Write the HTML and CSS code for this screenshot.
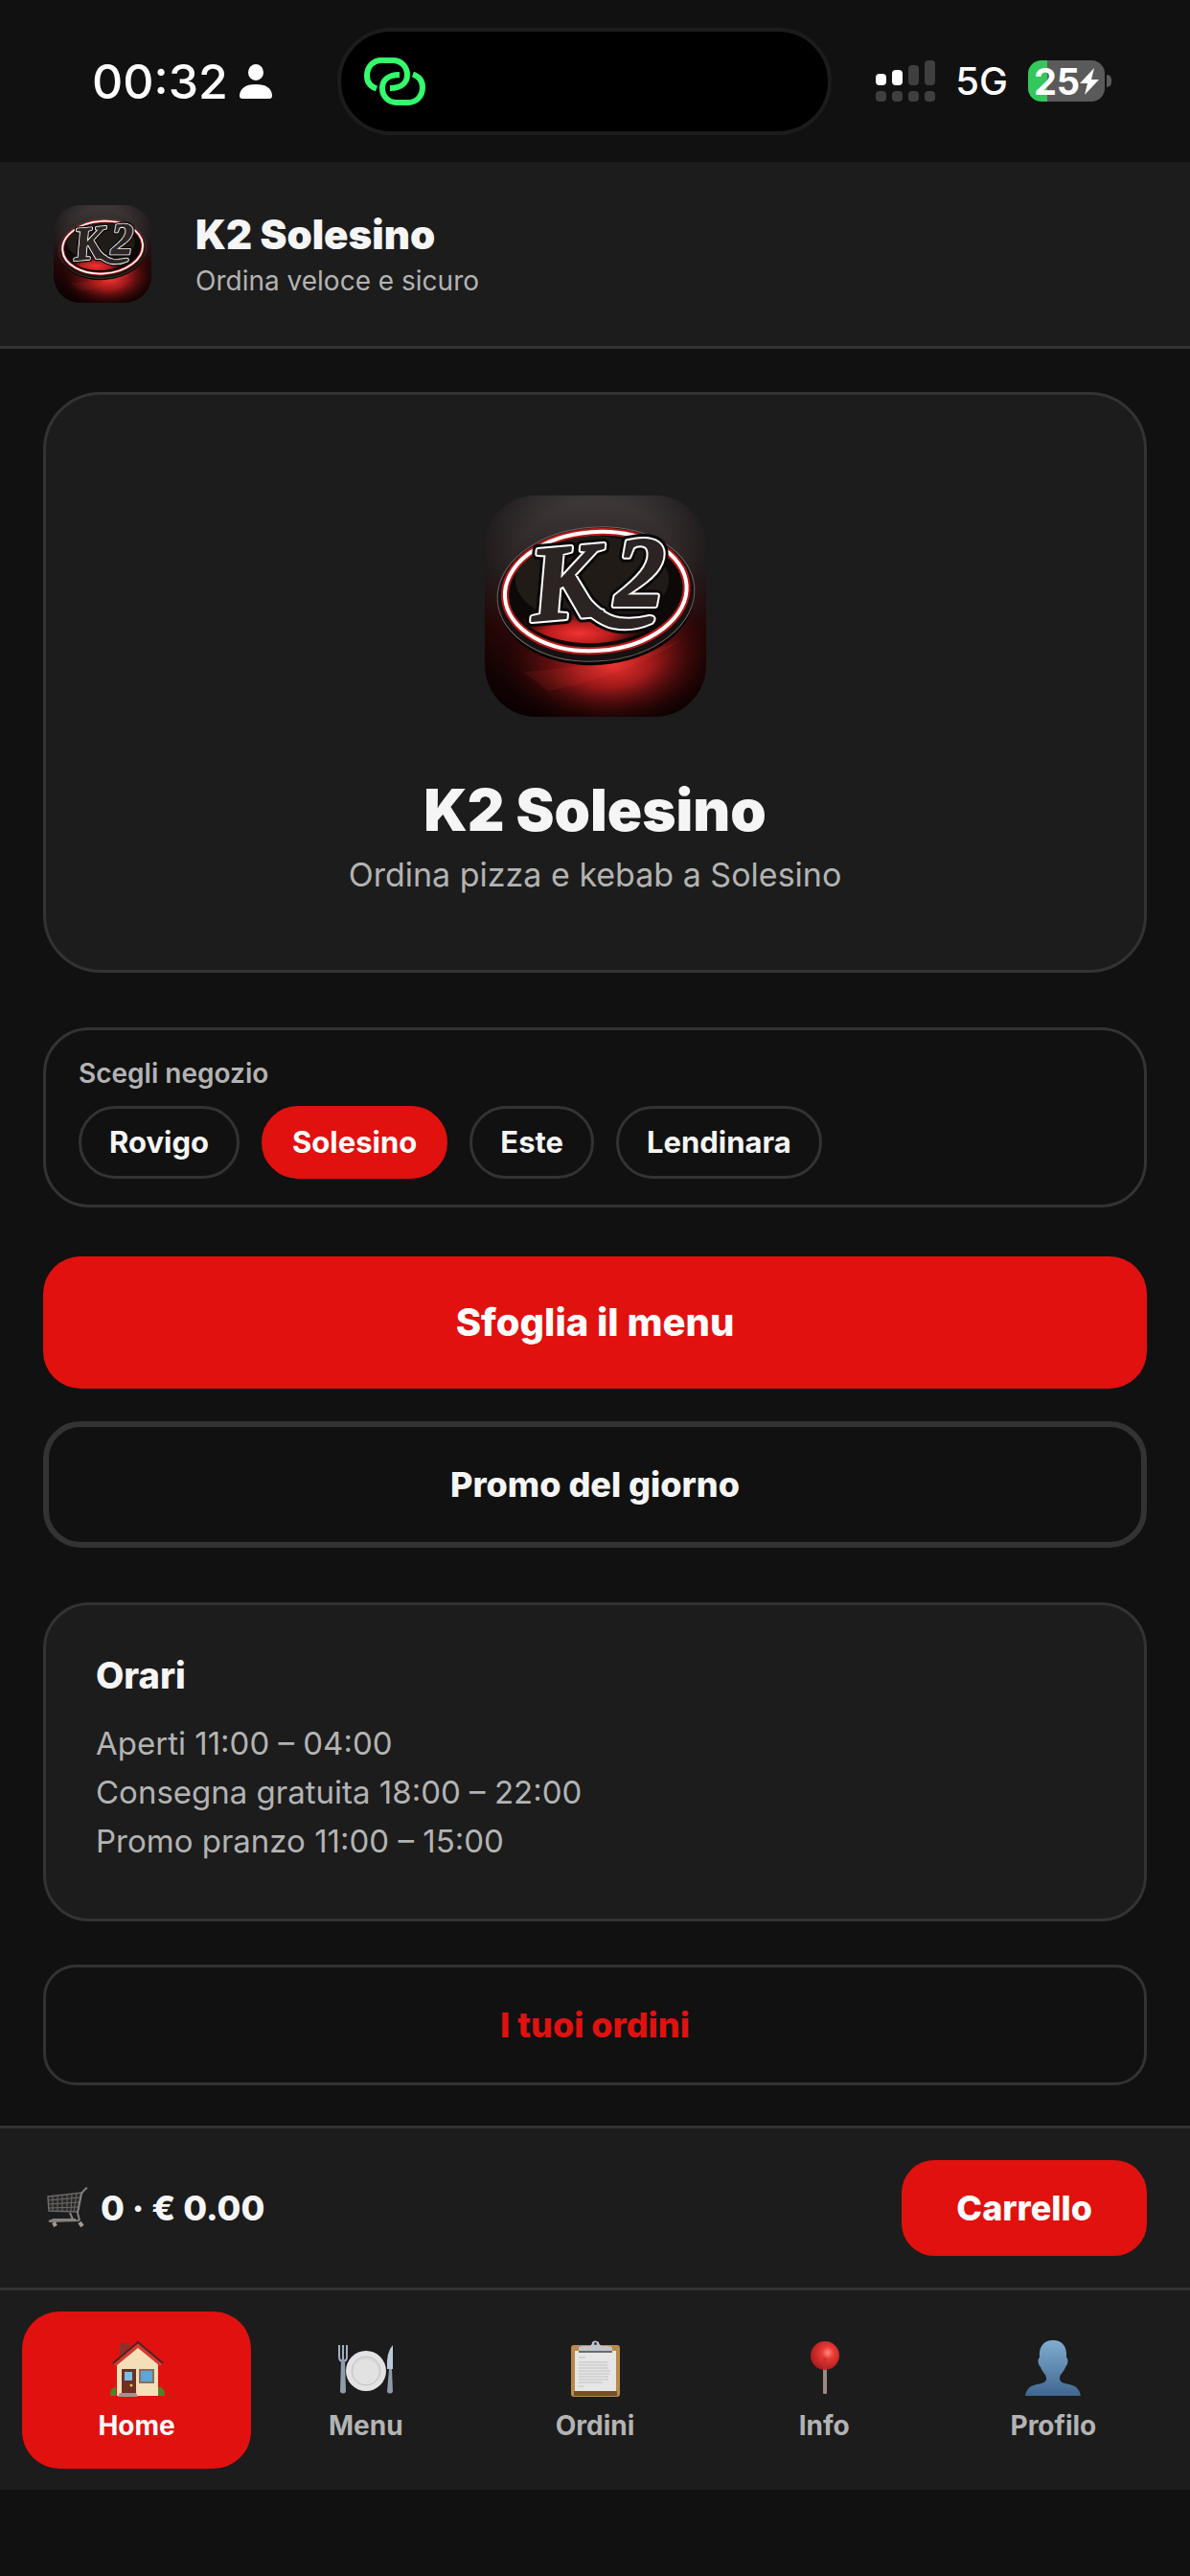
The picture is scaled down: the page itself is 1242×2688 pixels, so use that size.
FILE: index.html
```
<!DOCTYPE html>
<html lang="it">
<head>
    <meta charset="UTF-8">
    <meta name="viewport" content="width=device-width, initial-scale=1.0">
    <title>K2 Solesino</title>
    <link rel="stylesheet" href="styles.css">
</head>
<body>
    <!-- Logo condiviso -->
    <svg class="defs" width="0" height="0" aria-hidden="true">
        <defs>
            <linearGradient id="logoBg" x1="0" y1="0" x2="0" y2="1">
                <stop offset="0" stop-color="#3f393a"/>
                <stop offset="0.35" stop-color="#281f20"/>
                <stop offset="0.6" stop-color="#2c0708"/>
                <stop offset="1" stop-color="#160203"/>
            </linearGradient>
            <radialGradient id="logoGlow" cx="0.58" cy="0.74" r="0.5" gradientTransform="translate(0 0.3) scale(1 0.62)">
                <stop offset="0" stop-color="#ee3331"/>
                <stop offset="0.35" stop-color="#b51d1e" stop-opacity="0.85"/>
                <stop offset="1" stop-color="#4a0809" stop-opacity="0"/>
            </radialGradient>
            <radialGradient id="logoShade" cx="0.5" cy="0.45" r="0.7">
                <stop offset="0.6" stop-color="#000" stop-opacity="0"/>
                <stop offset="1" stop-color="#000" stop-opacity="0.7"/>
            </radialGradient>
            <radialGradient id="ovalGlow">
                <stop offset="0" stop-color="#f03432"/>
                <stop offset="0.45" stop-color="#b81b1c"/>
                <stop offset="1" stop-color="#3a0808" stop-opacity="0"/>
            </radialGradient>
            <clipPath id="ovalClip"><ellipse cx="116" cy="98" rx="90" ry="56" transform="rotate(-4 116 103)"/></clipPath>
            <g id="k2">
                <path d="M100 98 Q120 126 140 129 Q156 131 172 127 Q178 127 174 132 Q154 141 134 137 Q114 133 90 104 Z"/>
                <text x="50" y="131" class="logo-letter" transform="rotate(-5 50 131)">K</text>
                <text x="136" y="115" class="logo-letter logo-digit">2</text>
            </g>
            <symbol id="logo" viewBox="0 0 231 231">
                <rect width="231" height="231" fill="url(#logoBg)"/>
                <rect width="231" height="231" fill="url(#logoGlow)"/>
                <path d="M66 204 Q150 188 206 150 Q150 176 40 184 Z" fill="#f24a3a" opacity="0.1"/>
                <rect width="231" height="231" fill="url(#logoShade)"/>
                <g transform="rotate(-4 116 103)">
                    <ellipse cx="116" cy="108" rx="102" ry="69" fill="#080404"/>
                    <ellipse cx="116" cy="103" rx="103" ry="70" fill="#17110f" stroke="#6b6464" stroke-width="1"/>
                    <ellipse cx="116" cy="100" rx="95" ry="62" fill="#0d0908" stroke="#b81a1b" stroke-width="8"/>
                    <ellipse cx="116" cy="100" rx="95" ry="62" fill="none" stroke="#fff" stroke-width="4"/>
                </g>
                <g clip-path="url(#ovalClip)">
                    <ellipse cx="112" cy="88" rx="80" ry="46" fill="#211b18"/>
                    <ellipse cx="98" cy="144" rx="78" ry="26" fill="url(#ovalGlow)"/>
                </g>
                <use href="#k2" fill="#0a0706" stroke="#0a0706" stroke-width="12" stroke-linejoin="round"/>
                <use href="#k2" fill="#fff" stroke="#fff" stroke-width="6" stroke-linejoin="round"/>
                <use href="#k2" fill="#2b2422" stroke="#2b2422" stroke-width="2" stroke-linejoin="round"/>
            </symbol>
        </defs>
    </svg>

    <!-- Barra di stato -->
    <div class="status-bar">
        <div class="status-left">
            <span class="time">00:32</span>
            <svg class="person" viewBox="0 0 34 36" fill="#fff">
                <ellipse cx="17" cy="8.5" rx="8" ry="8.5"/>
                <path d="M3 36 Q0 36 0 32.500 Q1 21 17 21 Q33 21 34 32.500 Q34 36 31 36 Z"/>
            </svg>
        </div>
        <div class="island">
            <svg class="link-icon" viewBox="0 0 64 50" fill="none" stroke="#34ff6c" stroke-width="6">
                <path d="M13 32.500 C6 30 3 25 3 19 C3 9 10 3 18 3 H30 C39 3 45 10 45 18 C45 27 38 32 27 32"/>
                <path d="M51 17.500 C58 20 61 25 61 31 C61 41 54 47 46 47 H34 C25 47 19 40 19 32 C19 23 26 18 37 18"/>
            </svg>
        </div>
        <div class="status-right">
            <svg class="signal" viewBox="0 0 62 44">
                <g fill="#fff">
                    <rect x="0" y="14" width="11" height="12" rx="4"/>
                    <rect x="17" y="10" width="11" height="16" rx="4"/>
                </g>
                <g fill="#3f3f3f">
                    <rect x="34" y="5" width="11" height="21" rx="4"/>
                    <rect x="51" y="0" width="11" height="26" rx="4"/>
                    <rect x="0" y="32" width="11" height="11" rx="4"/>
                    <rect x="17" y="32" width="11" height="11" rx="4"/>
                    <rect x="34" y="32" width="11" height="11" rx="4"/>
                    <rect x="51" y="32" width="11" height="11" rx="4"/>
                </g>
            </svg>
            <span class="network">5G</span>
            <div class="battery">
                <div class="battery-body">
                    <span>25</span>
                    <svg class="bolt" viewBox="0 0 20 28" fill="#fff"><path d="M15 0 L0 16 H8 L5 28 L20 12 H12 Z"/></svg>
                </div>
                <div class="battery-cap"></div>
            </div>
        </div>
    </div>

    <!-- Intestazione -->
    <header class="header">
        <svg class="header-logo" role="img" aria-label="K2"><use href="#logo"/></svg>
        <div class="header-text">
            <div class="header-title">K2 Solesino</div>
            <div class="header-subtitle">Ordina veloce e sicuro</div>
        </div>
    </header>

    <main class="main">
        <section class="hero">
            <svg class="hero-logo" role="img" aria-label="K2"><use href="#logo"/></svg>
            <h1>K2 Solesino</h1>
            <p>Ordina pizza e kebab a Solesino</p>
        </section>

        <!-- Scelta negozio -->
        <section class="stores">
            <div class="stores-label" id="storesLabel">Scegli negozio</div>
            <div class="chips" role="group" aria-labelledby="storesLabel">
                <button class="chip">Rovigo</button>
                <button class="chip active">Solesino</button>
                <button class="chip">Este</button>
                <button class="chip">Lendinara</button>
            </div>
        </section>

        <button class="btn btn-primary">Sfoglia il menu</button>
        <button class="btn btn-promo">Promo del giorno</button>

        <section class="hours">
            <h2>Orari</h2>
            <p>Aperti 11:00 – 04:00</p>
            <p>Consegna gratuita 18:00 – 22:00</p>
            <p>Promo pranzo 11:00 – 15:00</p>
        </section>

        <button class="btn btn-orders">I tuoi ordini</button>
    </main>

    <!-- Carrello -->
    <div class="cart-bar">
        <div class="cart-total">
            <svg class="cart-icon" viewBox="0 0 48 48" fill="none" stroke="#6d6a69" stroke-width="1.500">
                <path d="M5 12 L40 8 L36 28 L6 27 Z" fill="#2b2a2a"/>
                <path d="M5 16 L39 13 M5 20 L38 18 M6 24 L37 23 M10 12 V27 M15 11 V27 M20 11 V27 M25 10 V28 M30 10 L29 28 M35 9 L32 28" stroke-width="1"/>
                <path d="M44 4 L40 9 L36 29 L38 37 M28 29 L31 36 M44 4 L46 3 M6 38 L38 37 M6 38 L11 36 H34" stroke="#85817f" stroke-width="2"/>
                <path d="M11 39 L13 43 M38 39 L41 43" stroke="#a8998f" stroke-width="4"/>
            </svg>
            <span>0 · € 0.00</span>
        </div>
        <button class="btn-cart">Carrello</button>
    </div>

    <!-- Navigazione -->
    <nav class="tabs">
        <a href="#" class="tab active">
            <svg viewBox="0 0 64 64">
                <path d="M14 5 H24 V20 L14 26 Z" fill="#8f2f29"/>
                <path d="M11 26 L33 8 L54 26 V60 H11 Z" fill="#f4dfb8"/>
                <path d="M7 26 L33 4 L59 26 L56 29 L33 10 L10 29 Z" fill="#d43a34"/>
                <path d="M7 26 L33 4 L59 26" fill="none" stroke="#4b2422" stroke-width="2"/>
                <rect x="16" y="32" width="15" height="27" fill="#6e3023"/>
                <rect x="19" y="35" width="8" height="9" fill="#79bde8"/>
                <circle cx="26" cy="49" r="1.500" fill="#eebd4a"/>
                <rect x="34" y="32" width="16" height="15" fill="#88705a"/>
                <rect x="36" y="34" width="12" height="11" fill="#5ba5d8"/>
                <path d="M14 57 H31 L33 61 H12 Z" fill="#a2938e"/>
                <path d="M4 60 Q3 52 10 51 V60 Z M54 51 Q61 50 61 60 H54 Z" fill="#4f812a"/>
            </svg>
            <span>Home</span>
        </a>
        <a href="#" class="tab">
            <svg viewBox="0 0 64 64">
                <circle cx="32" cy="34" r="21" fill="#e3e3e4"/>
                <circle cx="32" cy="34" r="15" fill="#d8d9dc" stroke="#bfc3c9" stroke-width="1"/>
                <circle cx="32" cy="35" r="13" fill="#e2e2e2"/>
                <path d="M4 7 V19 Q4 24 8 24 Q12 24 12 19 V7 M8 7 V22" fill="none" stroke="#9fb0c2" stroke-width="2"/>
                <path d="M6 22 H10 L11 56 Q8 59 5 56 Z" fill="#8e9bab"/>
                <path d="M60 7 Q53 14 54 32 H60 Z" fill="#bccbdc"/>
                <path d="M56 32 H59 L60 56 Q57 59 54 56 Z" fill="#8e9bab"/>
            </svg>
            <span>Menu</span>
        </a>
        <a href="#" class="tab">
            <svg viewBox="0 0 64 64">
                <rect x="7" y="7" width="51" height="54" rx="3" fill="#b98a4b"/>
                <rect x="10" y="55" width="45" height="5" fill="#74502a"/>
                <rect x="11" y="13" width="43" height="42" fill="#e6e6e6"/>
                <path d="M15 20 H22 M15 25 H45 M15 28 H45 M15 31 H46 M15 34 H48 M15 37 H47 M15 40 H46 M15 43 H46 M15 46 H40 M15 50 H20" stroke="#cdcdcd" stroke-width="1.500"/>
                <path d="M15 15 V10 Q15 8 20 8 H26 Q29 7 29 4 Q32 1 36 4 Q36 7 40 8 H45 Q50 8 50 10 V15 Z" fill="#c1c5cc"/>
                <path d="M15 14 H50" stroke="#6e6b67" stroke-width="2"/>
                <circle cx="32.500" cy="5.500" r="1.500" fill="#3a3a3e"/>
            </svg>
            <span>Ordini</span>
        </a>
        <a href="#" class="tab">
            <svg viewBox="0 0 64 64">
                <defs>
                    <radialGradient id="pinHead" cx="0.6" cy="0.4" r="0.6">
                        <stop offset="0" stop-color="#ff8a7c"/>
                        <stop offset="0.35" stop-color="#e93a36"/>
                        <stop offset="1" stop-color="#b01c1f"/>
                    </radialGradient>
                </defs>
                <rect x="31" y="30" width="4" height="28" rx="1" fill="#9c8a81"/>
                <circle cx="33" cy="18" r="15" fill="url(#pinHead)"/>
                <path d="M31 20 H35 V33 H31 Z" fill="#b5302f" opacity="0.6"/>
            </svg>
            <span>Info</span>
        </a>
        <a href="#" class="tab">
            <svg viewBox="0 0 64 64">
                <defs>
                    <linearGradient id="bust" x1="0" y1="0" x2="0" y2="1">
                        <stop offset="0" stop-color="#80add0"/>
                        <stop offset="1" stop-color="#40668f"/>
                    </linearGradient>
                </defs>
                <path d="M32 2 C42 2 47 9 46 20 C49 22 47 28 45 30 C43 36 39 37 39 42 C39 47 46 47 52 49 C58 51 60 55 61 60 H3 C4 55 6 51 12 49 C18 47 25 47 25 42 C25 37 21 36 19 30 C17 28 15 22 18 20 C17 9 22 2 32 2 Z" fill="url(#bust)"/>
            </svg>
            <span>Profilo</span>
        </a>
    </nav>
</body>
</html>
```
FILE: styles.css
```
/* Stile generale */
* {
    box-sizing: border-box;
}

body {
    margin: 0;
    min-height: 100vh;
    display: flex;
    flex-direction: column;
    background-color: #111;
    color: #f5f5f5;
    font-family: Inter, "Liberation Sans", sans-serif;
}

h1, h2, p {
    margin: 0;
}

button {
    font-family: inherit;
    color: inherit;
    cursor: pointer;
}

.defs {
    position: absolute;
}

.logo-letter {
    font-family: "Liberation Serif", serif;
    font-size: 112px;
    font-weight: bold;
    font-style: italic;
}

.logo-digit {
    font-size: 104px;
}

/* Barra di stato */
.status-bar {
    height: 169px;
    padding: 0 82px 0 96px;
    display: grid;
    grid-template-columns: 7fr 516px 8fr;
    align-items: center;
    color: #fff;
}

.status-left {
    display: flex;
    align-items: center;
    gap: 12px;
}

.time {
    font-size: 50px;
    font-weight: 500;
}

.person {
    width: 34px;
    height: 36px;
}

.island {
    height: 112px;
    padding-left: 24px;
    display: flex;
    align-items: center;
    background-color: #000;
    border: 4px solid #1c1c1c;
    border-radius: 56px;
}

.link-icon {
    width: 64px;
    height: 50px;
}

.status-right {
    display: flex;
    align-items: center;
    justify-content: flex-end;
    gap: 21px;
}

.signal {
    width: 62px;
    height: 44px;
}

.network {
    font-size: 40px;
    font-weight: 500;
}

.battery {
    display: flex;
    align-items: center;
    gap: 2px;
}

.battery-body {
    width: 80px;
    height: 43px;
    display: flex;
    align-items: center;
    justify-content: center;
    background: linear-gradient(to right, #34c759 25%, #5a5a5a 25%);
    border-radius: 14px;
    font-size: 38px;
    font-weight: 700;
}

.bolt {
    width: 20px;
    height: 28px;
}

.battery-cap {
    width: 5px;
    height: 13px;
    background-color: #5a5a5a;
    border-radius: 0 5px 5px 0;
}

/* Intestazione */
.header {
    padding: 45px 56px;
    display: flex;
    align-items: center;
    gap: 46px;
    background-color: #1c1c1c;
    border-bottom: 3px solid #333;
}

.header-logo {
    width: 102px;
    height: 102px;
    border-radius: 28px;
}

.header-text {
    padding-top: 4px;
}

.header-title {
    font-size: 42px;
    line-height: 52px;
    font-weight: 900;
}

.header-subtitle {
    font-size: 28px;
    line-height: 44px;
    color: #b3b3b3;
}

/* Contenuto */
.main {
    flex: 1;
    padding: 45px 45px 39px;
    display: flex;
    flex-direction: column;
}

.hero {
    padding: 105px 40px 75px;
    display: flex;
    flex-direction: column;
    align-items: center;
    background-color: #1c1c1c;
    border: 3px solid #333;
    border-radius: 60px;
    text-align: center;
}

.hero-logo {
    width: 231px;
    height: 231px;
    margin-bottom: 61px;
    border-radius: 54px;
}

.hero h1 {
    font-size: 60px;
    line-height: 72px;
    font-weight: 900;
}

.hero p {
    margin-top: 8px;
    font-size: 34px;
    line-height: 48px;
    color: #b3b3b3;
}

.stores {
    margin-top: 57px;
    padding: 27px 34px;
    border: 3px solid #333;
    border-radius: 48px;
}

.stores-label {
    font-size: 28px;
    line-height: 36px;
    font-weight: 600;
    color: #b3b3b3;
}

.chips {
    margin-top: 16px;
    display: flex;
    flex-wrap: wrap;
    gap: 23px;
}

.chip {
    padding: 17px 29px;
    background: none;
    border: 3px solid #333;
    border-radius: 38px;
    font-size: 31px;
    line-height: 36px;
    font-weight: 700;
}

.chip.active {
    background-color: #e0110f;
    border-color: #e0110f;
    color: #fff;
}

/* Pulsanti */
.btn {
    background: none;
    font-size: 36px;
    line-height: 44px;
    font-weight: 800;
}

.btn-primary {
    margin-top: 51px;
    padding: 47px;
    background-color: #e0110f;
    border: none;
    border-radius: 39px;
    font-size: 40px;
    color: #fff;
}

.btn-promo {
    margin-top: 34px;
    padding: 38px;
    border: 6px solid #333;
    border-radius: 39px;
}

.btn-orders {
    margin-top: 45px;
    padding: 38px;
    border: 3px solid #333;
    border-radius: 34px;
    color: #e0110f;
}

/* Orari */
.hours {
    margin-top: 57px;
    padding: 51px 52px 55px;
    background-color: #1c1c1c;
    border: 3px solid #333;
    border-radius: 48px;
}

.hours h2 {
    margin-bottom: 24px;
    font-size: 38px;
    line-height: 44px;
    font-weight: 800;
}

.hours p {
    font-size: 33px;
    line-height: 51px;
    color: #b3b3b3;
}

/* Carrello */
.cart-bar {
    padding: 33px 45px;
    display: flex;
    align-items: center;
    justify-content: space-between;
    background-color: #1c1c1c;
    border-top: 3px solid #333;
}

.cart-total {
    display: flex;
    align-items: center;
    gap: 12px;
    font-size: 36px;
    font-weight: 800;
}

.cart-icon {
    width: 48px;
    height: 48px;
}

.btn-cart {
    padding: 28px 57px;
    background-color: #e0110f;
    border: none;
    border-radius: 34px;
    font-size: 36px;
    line-height: 44px;
    font-weight: 800;
    color: #fff;
}

/* Navigazione */
.tabs {
    margin-bottom: 90px;
    padding: 22px 23px;
    display: grid;
    grid-template-columns: repeat(5, 1fr);
    background-color: #1c1c1c;
    border-top: 3px solid #333;
}

.tab {
    padding: 28px 0;
    display: flex;
    flex-direction: column;
    align-items: center;
    gap: 10px;
    border-radius: 39px;
    font-size: 28px;
    line-height: 34px;
    font-weight: 700;
    color: #b3b3b3;
    text-decoration: none;
}

.tab svg {
    width: 64px;
    height: 64px;
}

.tab.active {
    background-color: #e0110f;
    color: #fff;
}
```
